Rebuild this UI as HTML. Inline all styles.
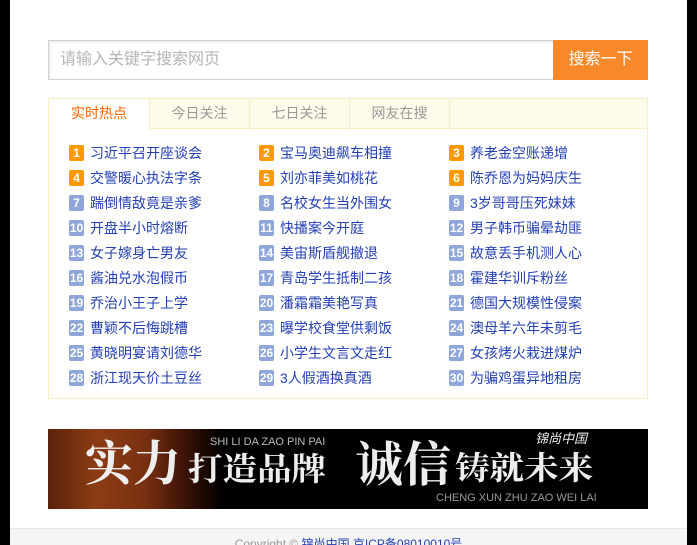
<!DOCTYPE html>
<html><head><meta charset="utf-8"><style>
*{margin:0;padding:0;box-sizing:border-box}
html,body{width:697px;height:545px;overflow:hidden}
body{background:#000;font-family:"Liberation Sans","Noto Sans CJK SC",sans-serif;font-size:14px;position:relative}
.page{position:absolute;left:10px;top:0;width:677px;height:545px;background:#fff}
.inp{position:absolute;left:48px;top:40px;width:506px;height:40px;border:1px solid #d2d2d2;box-shadow:inset 1px 1px 2px #e6e6e6;color:#b5b5b5;font-size:16px;line-height:38px;padding-left:11px}
.btn{position:absolute;left:553px;top:40px;width:95px;height:40px;background:#f7892a;color:#fff;font-size:16px;line-height:40px;text-align:center}
.box{position:absolute;left:48px;top:98px;width:600px;height:301px;border:1px solid #fbeec5}
.tabs{height:30px;background:#fffbeb;border-bottom:1px solid #fbeec5;position:relative}
.tab{position:absolute;top:0;height:30px;width:100px;line-height:28px;text-align:center;color:#999;font-size:14px;border-right:1px solid #f6ebc8}
.tab.on{background:#fff;color:#f60;height:31px;width:101px}
.it{position:absolute;height:16px;line-height:16px;color:#2440b3;font-size:14px;white-space:nowrap}
.it b{display:inline-block;width:15px;height:16px;border-radius:2px;color:#fff;font-size:12px;text-align:center;font-weight:bold;margin-right:6px;vertical-align:top;background:#8ea6d9}
.it b.o{background:#f90}
.ad{position:absolute;left:48px;top:429px;width:600px;height:80px;overflow:hidden;background:linear-gradient(90deg,#5a220a 0,#8c3c14 8%,#7a3010 16%,#3a1206 23%,#000 29%,#000 100%)}
.ad span{position:absolute;color:#eee;font-family:"Noto Serif CJK SC",serif;font-weight:bold;transform-origin:0 0;white-space:nowrap}
.ad span.s{font-family:"Liberation Sans",sans-serif;font-weight:normal;font-size:11px;line-height:12px}
.foot{position:absolute;left:10px;top:528px;width:677px;height:17px;background:#f5f5f5;border-top:1px solid #e8e8e8;font-size:12px;color:#999;text-align:center;line-height:30px}
</style></head><body>
<div class="page"></div>
<div class="inp">请输入关键字搜索网页</div>
<div class="btn">搜索一下</div>
<div class="box">
<div class="tabs">
<div class="tab on" style="left:0">实时热点</div>
<div class="tab" style="left:101px">今日关注</div>
<div class="tab" style="left:201px">七日关注</div>
<div class="tab" style="left:301px">网友在搜</div>
</div>
</div>
<div class="it" style="left:69px;top:145px"><b class="o">1</b>习近平召开座谈会</div>
<div class="it" style="left:259px;top:145px"><b class="o">2</b>宝马奥迪飙车相撞</div>
<div class="it" style="left:449px;top:145px"><b class="o">3</b>养老金空账递增</div>
<div class="it" style="left:69px;top:170px"><b class="o">4</b>交警暖心执法字条</div>
<div class="it" style="left:259px;top:170px"><b class="o">5</b>刘亦菲美如桃花</div>
<div class="it" style="left:449px;top:170px"><b class="o">6</b>陈乔恩为妈妈庆生</div>
<div class="it" style="left:69px;top:195px"><b>7</b>踹倒情敌竟是亲爹</div>
<div class="it" style="left:259px;top:195px"><b>8</b>名校女生当外围女</div>
<div class="it" style="left:449px;top:195px"><b>9</b>3岁哥哥压死妹妹</div>
<div class="it" style="left:69px;top:220px"><b>10</b>开盘半小时熔断</div>
<div class="it" style="left:259px;top:220px"><b>11</b>快播案今开庭</div>
<div class="it" style="left:449px;top:220px"><b>12</b>男子韩币骗晕劫匪</div>
<div class="it" style="left:69px;top:245px"><b>13</b>女子嫁身亡男友</div>
<div class="it" style="left:259px;top:245px"><b>14</b>美宙斯盾舰撤退</div>
<div class="it" style="left:449px;top:245px"><b>15</b>故意丢手机测人心</div>
<div class="it" style="left:69px;top:270px"><b>16</b>酱油兑水泡假币</div>
<div class="it" style="left:259px;top:270px"><b>17</b>青岛学生抵制二孩</div>
<div class="it" style="left:449px;top:270px"><b>18</b>霍建华训斥粉丝</div>
<div class="it" style="left:69px;top:295px"><b>19</b>乔治小王子上学</div>
<div class="it" style="left:259px;top:295px"><b>20</b>潘霜霜美艳写真</div>
<div class="it" style="left:449px;top:295px"><b>21</b>德国大规模性侵案</div>
<div class="it" style="left:69px;top:320px"><b>22</b>曹颖不后悔跳槽</div>
<div class="it" style="left:259px;top:320px"><b>23</b>曝学校食堂供剩饭</div>
<div class="it" style="left:449px;top:320px"><b>24</b>澳母羊六年未剪毛</div>
<div class="it" style="left:69px;top:345px"><b>25</b>黄晓明宴请刘德华</div>
<div class="it" style="left:259px;top:345px"><b>26</b>小学生文言文走红</div>
<div class="it" style="left:449px;top:345px"><b>27</b>女孩烤火栽进煤炉</div>
<div class="it" style="left:69px;top:370px"><b>28</b>浙江现天价土豆丝</div>
<div class="it" style="left:259px;top:370px"><b>29</b>3人假酒换真酒</div>
<div class="it" style="left:449px;top:370px"><b>30</b>为骗鸡蛋异地租房</div>
<div class="ad">
<span style="left:37px;top:5px;font-size:48px;line-height:52px">实力</span>
<span style="left:140px;top:20px;font-size:32px;line-height:36px;transform:scaleX(1.08)">打造品牌</span>
<span class="s" style="left:162px;top:7px;color:#bbb">SHI LI DA ZAO PIN PAI</span>
<span style="left:307px;top:6px;font-size:48px;line-height:52px">诚信</span>
<span style="left:407px;top:19px;font-size:32px;line-height:36px;transform:scaleX(1.08)">铸就未来</span>
<span style="left:487px;top:0px;font-size:13px;line-height:18px;font-style:italic;font-family:'Noto Sans CJK SC',sans-serif;font-weight:normal">锦尚中国</span>
<span class="s" style="left:388px;top:63px;color:#999">CHENG XUN ZHU ZAO WEI LAI</span>
</div>
<div class="foot">Copyright © <span style="color:#2440b3">锦尚中国 京ICP备08010010号</span></div>
</body></html>
